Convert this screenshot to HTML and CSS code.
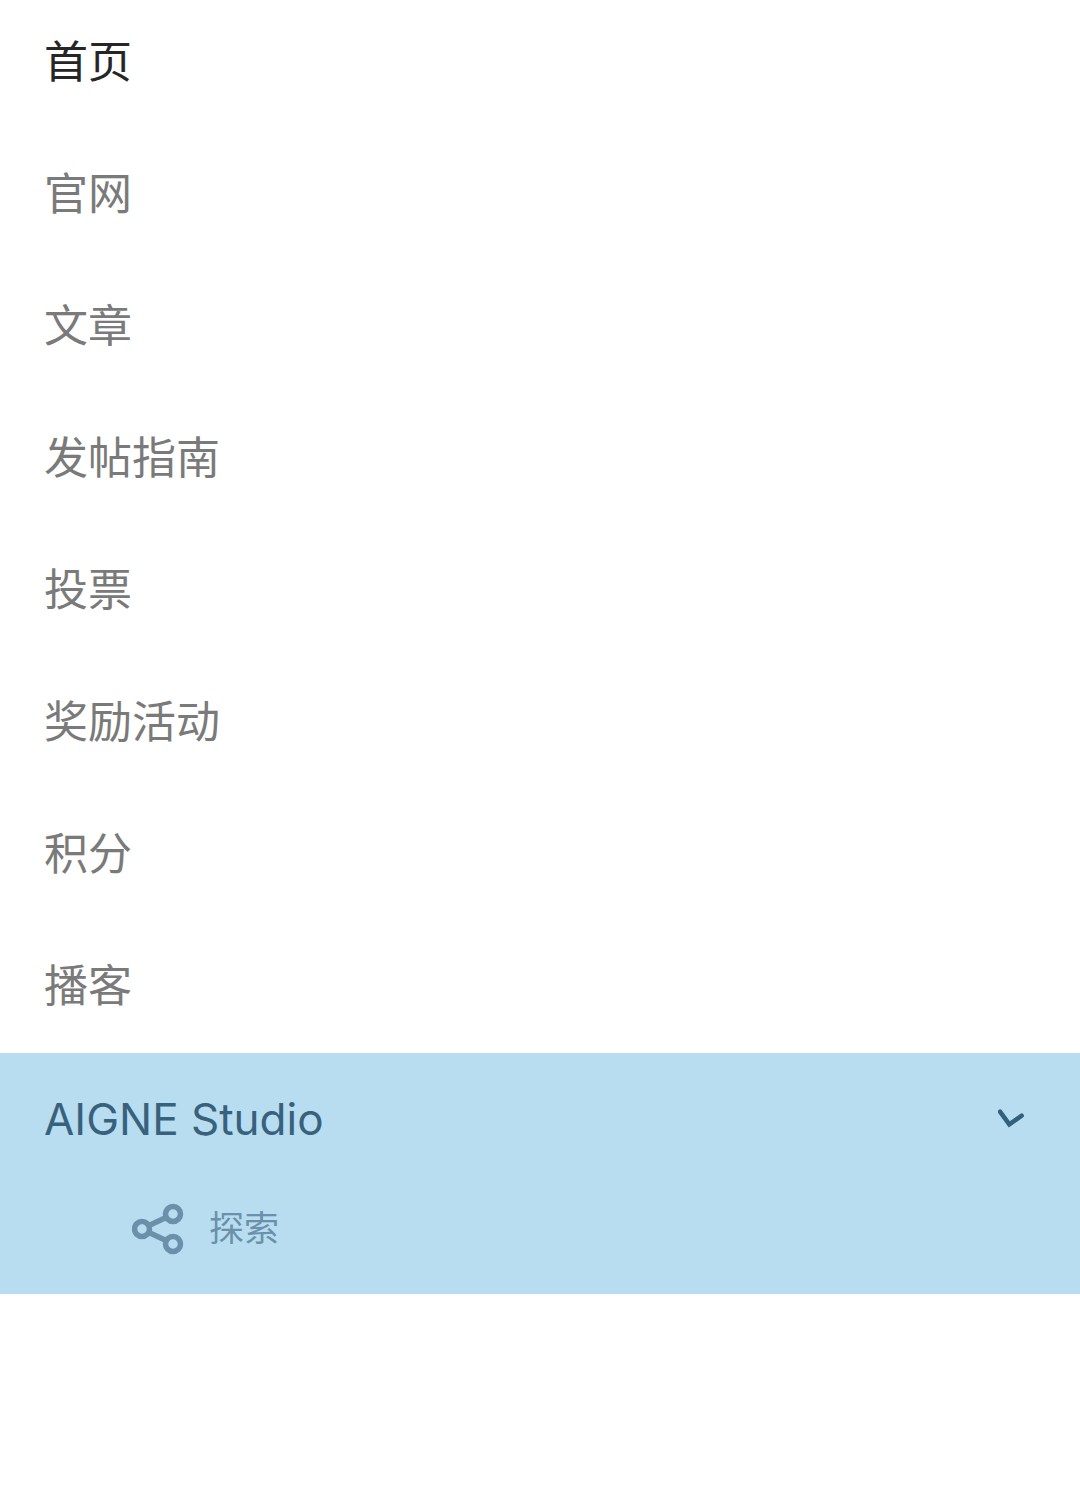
FILE: index.html
```html
<!DOCTYPE html>
<html lang="zh-CN">
<head>
  <meta charset="UTF-8" />
  <meta name="viewport" content="width=device-width, initial-scale=1.0"/>
  <title>菜单</title>
  <link rel="stylesheet" href="styles.css">
</head>
<body>
  <nav class="menu">
    <a class="item active">首页</a>
    <a class="item">官网</a>
    <a class="item">文章</a>
    <a class="item">发帖指南</a>
    <a class="item">投票</a>
    <a class="item">奖励活动</a>
    <a class="item">积分</a>
    <a class="item">播客</a>
    <div class="group">
      <div class="item group-title">
        <span>AIGNE Studio</span>
        <svg class="chevron" width="28" height="20" viewBox="0 0 28 20" fill="none">
          <path d="M2 2.7l9.3 12.6L23.7 6.7" stroke="#33607a" stroke-width="4.5" stroke-linecap="round"/>
        </svg>
      </div>
      <a class="sub-item">
        <svg class="share" width="52" height="52" viewBox="0 0 52 52" fill="none" stroke="#6a91a9" stroke-width="5.5">
          <circle cx="10" cy="26" r="7.5"/>
          <circle cx="41" cy="11" r="7.5"/>
          <circle cx="41" cy="41" r="7.5"/>
          <path d="M17 22.5l17-8M17 29.5l17 8"/>
        </svg>
        <span class="sub-label">探索</span>
      </a>
    </div>
  </nav>
</body>
</html>
```

FILE: styles.css
```css
body {
  margin: 0;
  background: #fff;
  font-family: Inter, "Noto Sans CJK SC", sans-serif;
  overflow: hidden;
}
.menu {
  display: flex;
  flex-direction: column;
  margin-top: -7px;
}
.item {
  display: flex;
  align-items: center;
  height: 132px;
  padding: 0 44px;
  font-size: 44px;
  color: #7a7a7a;
}
.active {
  color: #262626;
}
.group {
  background: #b9ddf0;
  height: 241px;
  margin-top: 4px;
}
.group-title {
  justify-content: space-between;
  padding-right: 54px;
  color: #38627c;
}
.sub-item {
  display: flex;
  align-items: center;
  gap: 25px;
  margin-top: 15px;
  padding-left: 132px;
  font-size: 35px;
  color: #6a91a9;
}
.sub-label {
  padding-bottom: 6px;
}
```
